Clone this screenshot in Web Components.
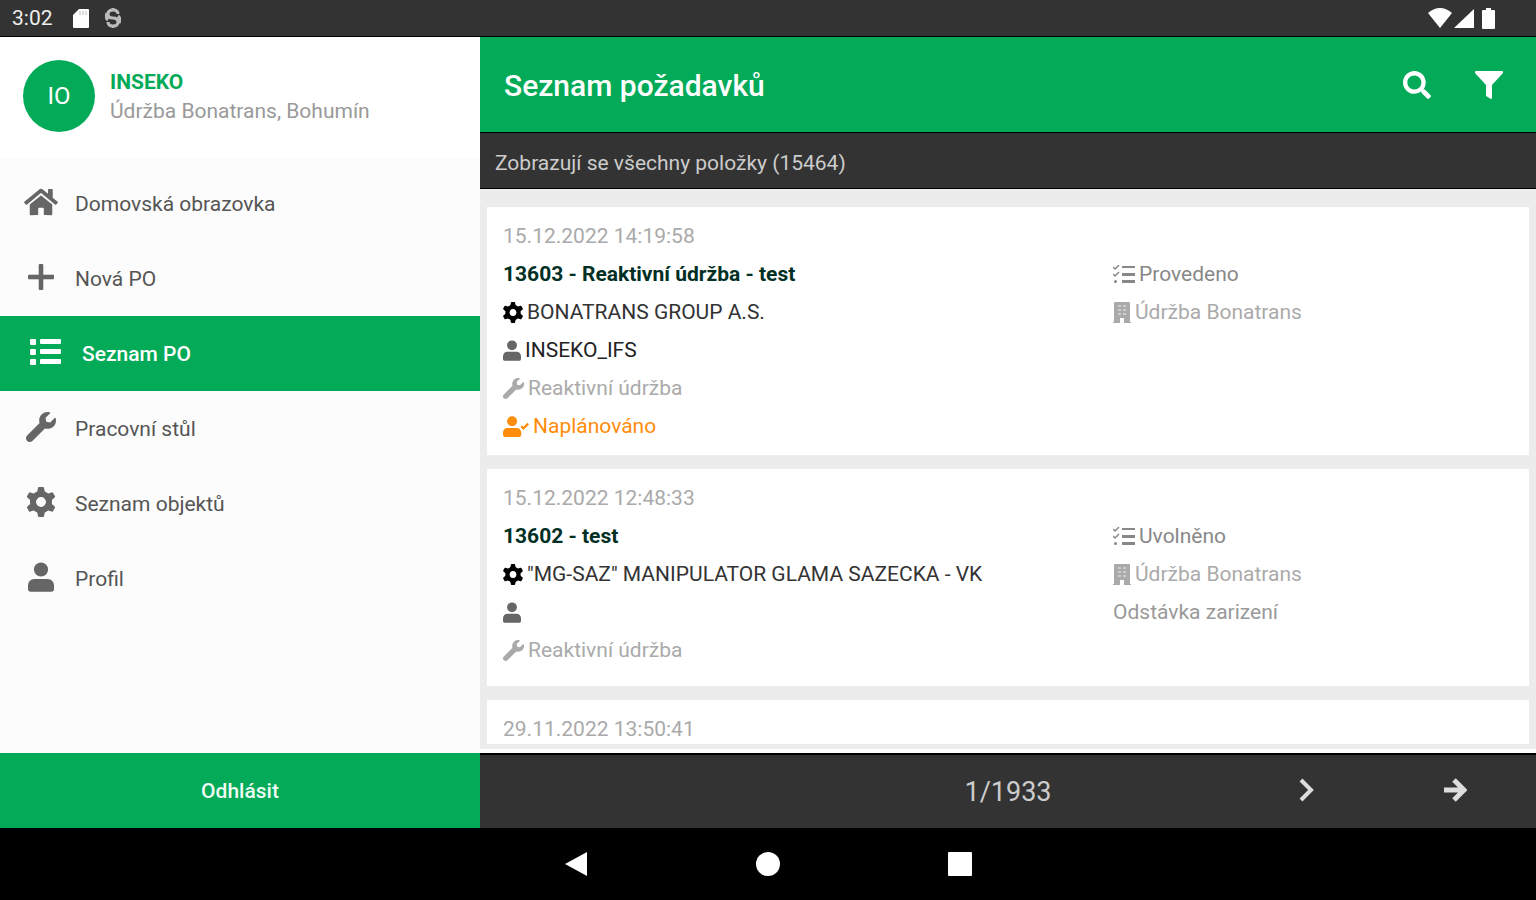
<!DOCTYPE html>
<html lang="cs">
<head>
<meta charset="utf-8">
<title>Seznam požadavků</title>
<style>
    html, body {
        margin: 0;
        height: 100%;
    }
    body {
        font-family: Roboto, "Liberation Sans", sans-serif;
        font-size: 21px;
        --green: #03aa57;
        --dark: #333333;
    }
</style>
</head>
<body>
<maintenance-app></maintenance-app>

<script>
const GEAR_TOOTH = 'M9 10L11 1q0-1 1-1h4q1 0 1 1l2 9z';
const USER = '<circle cx="224" cy="126" r="122"/><path d="M110 290h228c62 0 110 50 110 112v66c0 24-20 44-44 44H44c-24 0-44-20-44-44v-66c0-62 48-112 110-112z"/>';

// [width, height, markup]
const ICONS = {
    home: [576, 512, '<path d="M280.37 148.26L96 300.11V464a16 16 0 0 0 16 16l112.06-.29a16 16 0 0 0 15.92-16V368a16 16 0 0 1 16-16h64a16 16 0 0 1 16 16v95.64a16 16 0 0 0 16 16.05L464 480a16 16 0 0 0 16-16V300L295.67 148.26a12.19 12.19 0 0 0-15.3 0zM571.6 251.47L488 182.56V44.05a12 12 0 0 0-12-12h-56a12 12 0 0 0-12 12v72.61L318.47 43a48 48 0 0 0-61 0L4.34 251.47a12 12 0 0 0-1.6 16.9l25.5 31A12 12 0 0 0 45.15 301l235.22-193.74a12.19 12.19 0 0 1 15.3 0L530.9 301a12 12 0 0 0 16.9-1.6l25.5-31a12 12 0 0 0-1.7-16.93z"/>'],
    plus: [26, 26, '<path d="M11 1q0-1 1-1h2q1 0 1 1v10h10q1 0 1 1v2q0 1-1 1H15v10q0 1-1 1h-2q-1 0-1-1V15H1q-1 0-1-1v-2q0-1 1-1h10z" stroke="currentColor" stroke-width=".6"/>'],
    list: [31, 26, '<rect width="6" height="6" rx="1"/><rect y="10" width="6" height="6" rx="1"/><rect y="20" width="6" height="6" rx="1"/><rect x="10" width="21" height="5" rx="1"/><rect x="10" y="10" width="21" height="5" rx="1"/><rect x="10" y="20" width="21" height="5" rx="1"/>'],
    wrench: [512, 512, '<path d="M507.73 109.1c-2.24-9.03-13.54-12.09-20.12-5.51l-74.36 74.36-67.88-11.31-11.31-67.88 74.36-74.36c6.62-6.62 3.43-17.9-5.66-20.16-47.38-11.74-99.55.91-136.58 37.93-39.64 39.64-50.55 97.1-34.05 147.2L18.74 402.76c-24.99 24.99-24.99 65.51 0 90.5 24.99 24.99 65.51 24.99 90.5 0l213.21-213.21c50.12 16.71 107.47 5.68 147.37-34.22 37.07-37.07 49.7-89.32 37.91-136.73z"/>'],
    cog: [28, 30, '<circle cx="14" cy="15" r="8" fill="none" stroke="currentColor" stroke-width="6"/>' +
        [0, 60, 120, 180, 240, 300].map(a => `<path d="${GEAR_TOOTH}" transform="rotate(${a} 14 15)"/>`).join('')],
    user: [448, 512, USER],
    userCheck: [640, 512, USER + '<path d="M450 250l54 54 118-118" fill="none" stroke="currentColor" stroke-width="58"/>'],
    tasks: [22, 18, '<path d="M9 1h13v2H9zM9 8h13v3H9zM9 15h13v3H9z"/><path d="M0 2l2 2 4-4M0 9l2 2 4-4" fill="none" stroke="currentColor" stroke-width="1.5"/><circle cx="2.5" cy="16.5" r="1.5"/>'],
    building: [18, 21, '<path d="M2 0h14q1 0 1 1v19h1v1h-7v-5H7v5H0v-1h1V1q0-1 1-1z"/><path d="M5 3h3v2H5zM10 3h3v2h-3zM5 7h3v2H5zM10 7h3v2h-3zM5 11h3v2H5zM10 11h3v2h-3z" fill="#fff" fill-opacity=".4"/>'],
    search: [512, 512, '<path d="M505 442.7L405.3 343c-4.5-4.5-10.6-7-17-7H372c27.6-35.3 44-79.7 44-128C416 93.1 322.9 0 208 0S0 93.1 0 208s93.1 208 208 208c48.3 0 92.7-16.4 128-44v16.3c0 6.4 2.5 12.5 7 17l99.7 99.7c9.4 9.4 24.6 9.4 33.9 0l28.3-28.3c9.4-9.4 9.4-24.6.1-34zM208 336c-70.7 0-128-57.2-128-128 0-70.7 57.2-128 128-128 70.7 0 128 57.2 128 128 0 70.7-57.2 128-128 128z"/>'],
    filter: [28, 28, '<path d="M1 0h26q1 0 1 1v1L17 14v13q0 1-1 1l-5-3V14L0 2V1q0-1 1-1z"/>'],
    chevron: [15, 24, '<path d="M2 2l10 10L2 22" fill="none" stroke="currentColor" stroke-width="4"/>'],
    arrow: [24, 24, '<path d="M1 12h20M11 2l10 10-10 10" fill="none" stroke="currentColor" stroke-width="5"/>'],
    sdCard: [16, 19, '<path d="M6 0h9q1 0 1 1v17q0 1-1 1H1q-1 0-1-1V6z"/><path d="M7 2v4M10 2v4M13 2v4" stroke="#333333" stroke-opacity=".35"/>'],
    service: [16, 20, '<path d="M13 6q0-4-5-4T3 6t5 4 5 4-5 4-5-4M8 0v3M8 17v3M2 5Q0 10 3 12M14 15q2-5-1-7" fill="none" stroke="currentColor" stroke-width="3"/>'],
    wifi: [24, 20, '<path d="M12 20L0 5q12-10 24 0z"/>'],
    signal: [20, 19, '<path d="M20 0v19H0z"/>'],
    battery: [13, 21, '<path d="M4 0h5v2h3q1 0 1 1v17q0 1-1 1H1q-1 0-1-1V3q0-1 1-1h3z"/>'],
    back: [22, 24, '<path d="M22 0v24L0 12z"/>'],
    circle: [24, 24, '<circle cx="12" cy="12" r="12"/>'],
    square: [24, 24, '<rect width="24" height="24" rx="1"/>']
};

class AppIcon extends HTMLElement {
    connectedCallback() {
        const [w, h, markup] = ICONS[this.getAttribute('name')];
        const height = this.getAttribute('size') || h;
        if (!this.shadowRoot) this.attachShadow({mode: 'open'});
        this.shadowRoot.innerHTML = `
            <style>
                :host { display: inline-flex; flex: none; }
                svg { display: block; fill: currentColor; }
            </style>
            <svg viewBox="0 0 ${w} ${h}" width="${Math.round(height * w / h)}" height="${height}" aria-hidden="true">${markup}</svg>
        `;
    }
}
window.customElements.define('app-icon', AppIcon);

// the other elements only differ in their template
function define(name, html) {
    const template = document.createElement('template');
    template.innerHTML = html;
    window.customElements.define(name, class extends HTMLElement {
        constructor() {
            super();
            this.attachShadow({mode: 'open'}).appendChild(template.content.cloneNode(true));
        }
    });
}

define('status-bar', `
    <style>
        :host {
            display: flex;
            align-items: center;
            justify-content: space-between;
            box-sizing: border-box;
            height: 37px;
            padding: 0 41px 0 12px;
            border-bottom: 1px solid #000;
            background: var(--dark);
            color: #fff;
        }
        div { display: flex; align-items: center; gap: 16px; }
        .system { gap: 2px; }
        .system app-icon:last-child { margin-left: 6px; }
        time { margin-right: 4px; color: #eee; }
        .service { color: #bbb; }
    </style>
    <div><time>3:02</time><app-icon name="sdCard"></app-icon><app-icon class="service" name="service"></app-icon></div>
    <div class="system"><app-icon name="wifi"></app-icon><app-icon name="signal"></app-icon><app-icon name="battery"></app-icon></div>
`);

define('user-header', `
    <style>
        :host {
            display: flex;
            gap: 15px;
            box-sizing: border-box;
            height: 121px;
            padding: 23px;
            background: #fff;
            color: #999;
            line-height: 29px;
        }
        .avatar {
            display: grid;
            place-items: center;
            width: 72px;
            height: 72px;
            border-radius: 50%;
            background: var(--green);
            color: #fff;
            font-size: 24px;
        }
        .texts { padding-top: 8px; }
        .name { color: var(--green); font-weight: 700; }
    </style>
    <div class="avatar"><slot name="initials"></slot></div>
    <div class="texts">
        <div class="name"><slot name="name"></slot></div>
        <div><slot></slot></div>
    </div>
`);

class MenuItem extends HTMLElement {
    connectedCallback() {
        if (!this.shadowRoot) this.attachShadow({mode: 'open'});
        this.shadowRoot.innerHTML = `
            <style>
                :host { display: block; }
                a {
                    display: flex;
                    align-items: center;
                    gap: 18px;
                    height: 75px;
                    padding: 0 24px;
                    color: #555;
                    text-decoration: none;
                }
                .icon { display: flex; justify-content: center; width: 33px; padding-bottom: 3px; color: #666; }
                :host([active]) a {
                    gap: 20px;
                    padding: 0 29px;
                    background: var(--green);
                    color: #fff;
                    font-weight: 500;
                }
                :host([active]) .icon { color: #fff; }
            </style>
            <a href="#${this.getAttribute('icon')}">
                <span class="icon"><app-icon name="${this.getAttribute('icon')}" size="${this.getAttribute('size')}"></app-icon></span>
                <slot></slot>
            </a>
        `;
    }
}
window.customElements.define('menu-item', MenuItem);

define('side-menu', `
    <style>
        :host { display: flex; flex-direction: column; min-height: 0; background: #fcfcfc; }
        nav { flex: 1; padding-top: 8px; min-height: 0; overflow: hidden; }
        button {
            height: 75px;
            border: 0;
            background: var(--green);
            color: #eefaf3;
            font: inherit;
            font-weight: 500;
        }
    </style>
    <user-header>
        <span slot="initials">IO</span>
        <span slot="name">INSEKO</span>
        Údržba Bonatrans, Bohumín
    </user-header>
    <nav>
        <menu-item icon="home" size="30">Domovská obrazovka</menu-item>
        <menu-item icon="plus" size="26">Nová PO</menu-item>
        <menu-item icon="list" size="26" active>Seznam PO</menu-item>
        <menu-item icon="wrench" size="30">Pracovní stůl</menu-item>
        <menu-item icon="cog" size="30">Seznam objektů</menu-item>
        <menu-item icon="user" size="30">Profil</menu-item>
    </nav>
    <button type="button">Odhlásit</button>
`);

define('title-bar', `
    <style>
        :host {
            display: flex;
            align-items: center;
            height: 95px;
            padding: 0 11px 0 24px;
            background: var(--green);
            color: #fff;
        }
        h1 { flex: 1; margin: 0; padding-top: 2px; font-size: 30px; font-weight: 500; }
        button {
            display: grid;
            place-items: center;
            width: 72px;
            height: 72px;
            padding: 0;
            border: 0;
            background: none;
            color: inherit;
        }
    </style>
    <h1><slot></slot></h1>
    <button type="button" aria-label="Hledat"><app-icon name="search" size="28"></app-icon></button>
    <button type="button" aria-label="Filtr"><app-icon name="filter"></app-icon></button>
`);

define('request-card', `
    <style>
        :host {
            display: grid;
            grid-template-columns: 3fr 2fr;
            column-gap: 10px;
            flex: none;
            align-content: start;
            box-sizing: border-box;
            min-height: 217px;
            padding: 10px 16px;
            background: #fff;
            color: #999;
            line-height: 38px;
        }
        time { grid-column: 1 / -1; color: #aaa; }
    </style>
    <time><slot name="date"></slot></time>
    <div><slot></slot></div>
    <div><slot name="side"></slot></div>
`);

class CardLine extends HTMLElement {
    connectedCallback() {
        const icon = this.getAttribute('icon');
        if (!this.shadowRoot) this.attachShadow({mode: 'open'});
        this.shadowRoot.innerHTML = `
            <style>
                :host { display: flex; align-items: center; gap: 4px; height: 38px; white-space: nowrap; }
                :host([kind="title"]) { color: #012f24; font-weight: 700; }
                :host([kind="object"]) { color: #333; }
                :host([kind="object"]) app-icon { color: #000; }
                :host([kind="person"]) { color: #222; }
                :host([kind="person"]) app-icon { color: #666; }
                :host([kind="muted"]) { color: #aaa; }
                :host([kind="planned"]) { color: #ff8c0a; }
                :host([kind="state"]) { color: #888; }
            </style>
            ${icon ? `<app-icon name="${icon}" size="${this.getAttribute('size') || 21}"></app-icon>` : ''}
            <slot></slot>
        `;
    }
}
window.customElements.define('card-line', CardLine);

define('request-list', `
    <style>
        :host { display: flex; flex-direction: column; min-height: 0; min-width: 0; }
        .info {
            box-sizing: border-box;
            height: 57px;
            padding: 0 15px;
            border: solid #000;
            border-width: 1px 0;
            background: var(--dark);
            color: #ccc;
            line-height: 60px;
        }
        .cards {
            display: flex;
            flex: 1;
            flex-direction: column;
            gap: 14px;
            min-height: 0;
            padding: 18px 7px 0;
            overflow: hidden;
            background: #ececec;
        }
        .end { height: 5px; border-bottom: 4px solid #fff; background: #ececec; }
    </style>
    <title-bar>Seznam požadavků</title-bar>
    <div class="info">Zobrazují se všechny položky (15464)</div>
    <div class="cards">
        <request-card>
            <span slot="date">15.12.2022 14:19:58</span>
            <card-line kind="title">13603 - Reaktivní údržba - test</card-line>
            <card-line kind="object" icon="cog">BONATRANS GROUP A.S.</card-line>
            <card-line kind="person" icon="user">INSEKO_IFS</card-line>
            <card-line kind="muted" icon="wrench">Reaktivní údržba</card-line>
            <card-line kind="planned" icon="userCheck">Naplánováno</card-line>
            <card-line slot="side" kind="state" icon="tasks" size="18">Provedeno</card-line>
            <card-line slot="side" kind="muted" icon="building">Údržba Bonatrans</card-line>
        </request-card>
        <request-card>
            <span slot="date">15.12.2022 12:48:33</span>
            <card-line kind="title">13602 - test</card-line>
            <card-line kind="object" icon="cog">"MG-SAZ" MANIPULATOR GLAMA SAZECKA - VK</card-line>
            <card-line kind="person" icon="user"></card-line>
            <card-line kind="muted" icon="wrench">Reaktivní údržba</card-line>
            <card-line slot="side" kind="state" icon="tasks" size="18">Uvolněno</card-line>
            <card-line slot="side" kind="muted" icon="building">Údržba Bonatrans</card-line>
            <card-line slot="side">Odstávka zarizení</card-line>
        </request-card>
        <request-card>
            <span slot="date">29.11.2022 13:50:41</span>
        </request-card>
    </div>
    <div class="end"></div>
    <page-bar>1/1933</page-bar>
`);

define('page-bar', `
    <style>
        :host {
            display: grid;
            grid-template-columns: 1fr 1fr 3fr 1fr 1fr;
            align-items: center;
            box-sizing: border-box;
            height: 75px;
            padding: 0 6px;
            border-top: 2px solid #000;
            background: var(--dark);
            color: #ccc;
            font-size: 27px;
            text-align: center;
        }
        span { grid-column: 3; }
        button {
            display: grid;
            place-items: center;
            height: 72px;
            padding: 0 0 3px;
            border: 0;
            background: none;
            color: #ddd;
        }
    </style>
    <span><slot></slot></span>
    <button type="button" aria-label="Další"><app-icon name="chevron"></app-icon></button>
    <button type="button" aria-label="Poslední"><app-icon name="arrow"></app-icon></button>
`);

define('system-nav', `
    <style>
        :host { display: flex; justify-content: center; height: 72px; background: #000; }
        button {
            display: grid;
            place-items: center;
            width: 192px;
            padding: 0;
            border: 0;
            background: none;
            color: #fff;
        }
    </style>
    <button type="button" aria-label="Zpět"><app-icon name="back"></app-icon></button>
    <button type="button" aria-label="Domů"><app-icon name="circle"></app-icon></button>
    <button type="button" aria-label="Přehled"><app-icon name="square"></app-icon></button>
`);

define('maintenance-app', `
    <style>
        :host { display: flex; flex-direction: column; height: 100vh; }
        main { display: grid; grid-template-columns: 5fr 11fr; grid-template-rows: minmax(0, 1fr); flex: 1; min-height: 0; }
    </style>
    <status-bar></status-bar>
    <main>
        <side-menu></side-menu>
        <request-list></request-list>
    </main>
    <system-nav></system-nav>
`);
</script>
</body>
</html>
